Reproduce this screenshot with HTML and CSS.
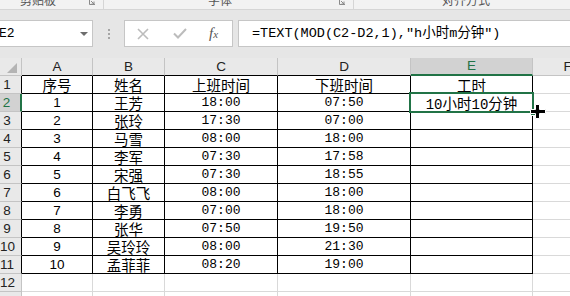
FILE: index.html
```html
<!DOCTYPE html>
<html>
<head>
    <meta charset="utf-8">
    <title>工时计算</title>
    <link rel="stylesheet" href="styles.css">
</head>
<body>

    <!-- bottom edge of the ribbon, group labels cut off -->
    <div class="ribbon">
        <div class="group clip">
            <span class="group-label">剪贴板</span>
            <svg class="launcher" width="6" height="6" viewBox="0 0 6 6"><path d="M0.5 0v5.5H6M2 2l3 3M5 2.5V5H2.5" fill="none" stroke="#8a8a8a"/></svg>
        </div>
        <div class="group font">
            <span class="group-label">字体</span>
            <svg class="launcher" width="6" height="6" viewBox="0 0 6 6"><path d="M0.5 0v5.5H6M2 2l3 3M5 2.5V5H2.5" fill="none" stroke="#8a8a8a"/></svg>
        </div>
        <div class="group align">
            <span class="group-label">对齐方式</span>
        </div>
    </div>

    <!-- name box + formula bar -->
    <div class="fbar">
        <div class="namebox">
            <span class="name">E2</span>
            <span class="drop"></span>
        </div>
        <div class="grip"><i></i><i></i><i></i></div>
        <div class="fxbox">
            <svg class="cancel" width="12" height="12" viewBox="0 0 12 12"><path d="M1 1l10 10M11 1L1 11" stroke="#bcbcbc" stroke-width="1.6"/></svg>
            <svg class="enter" width="14" height="11" viewBox="0 0 14 11"><path d="M1 5.5l4 4L13 1" fill="none" stroke="#bcbcbc" stroke-width="2"/></svg>
            <span class="fx">f<small>x</small></span>
        </div>
        <div class="formula">=TEXT(MOD(C2-D2,1),"h小时m分钟")</div>
    </div>

    <div class="sheet">
        <!-- column headers -->
        <div class="cell corner"><span class="tri"></span></div>
        <div class="cell ch edge">A</div>
        <div class="cell ch edge">B</div>
        <div class="cell ch edge">C</div>
        <div class="cell ch edge">D</div>
        <div class="cell ch sel">E</div>
        <div class="cell ch">F</div>

        <div class="cell rh edge">1</div>
        <div class="cell t cn">序号</div>
        <div class="cell t cn">姓名</div>
        <div class="cell t cn">上班时间</div>
        <div class="cell t cn">下班时间</div>
        <div class="cell t cn">工时</div>
        <div class="cell"></div>

        <div class="cell rh sel">2</div>
        <div class="cell t num">1</div>
        <div class="cell t cn">王芳</div>
        <div class="cell t">18:00</div>
        <div class="cell t">07:50</div>
        <div class="cell t mix">10<span class="cn">小时</span>10<span class="cn">分钟</span></div>
        <div class="cell"></div>

        <div class="cell rh edge">3</div>
        <div class="cell t num">2</div>
        <div class="cell t cn">张玲</div>
        <div class="cell t">17:30</div>
        <div class="cell t">07:00</div>
        <div class="cell t"></div>
        <div class="cell"></div>

        <div class="cell rh edge">4</div>
        <div class="cell t num">3</div>
        <div class="cell t cn">马雪</div>
        <div class="cell t">08:00</div>
        <div class="cell t">18:00</div>
        <div class="cell t"></div>
        <div class="cell"></div>

        <div class="cell rh edge">5</div>
        <div class="cell t num">4</div>
        <div class="cell t cn">李军</div>
        <div class="cell t">07:30</div>
        <div class="cell t">17:58</div>
        <div class="cell t"></div>
        <div class="cell"></div>

        <div class="cell rh edge">6</div>
        <div class="cell t num">5</div>
        <div class="cell t cn">宋强</div>
        <div class="cell t">07:30</div>
        <div class="cell t">18:55</div>
        <div class="cell t"></div>
        <div class="cell"></div>

        <div class="cell rh edge">7</div>
        <div class="cell t num">6</div>
        <div class="cell t cn">白飞飞</div>
        <div class="cell t">08:00</div>
        <div class="cell t">18:00</div>
        <div class="cell t"></div>
        <div class="cell"></div>

        <div class="cell rh edge">8</div>
        <div class="cell t num">7</div>
        <div class="cell t cn">李勇</div>
        <div class="cell t">07:00</div>
        <div class="cell t">18:00</div>
        <div class="cell t"></div>
        <div class="cell"></div>

        <div class="cell rh edge">9</div>
        <div class="cell t num">8</div>
        <div class="cell t cn">张华</div>
        <div class="cell t">07:50</div>
        <div class="cell t">19:50</div>
        <div class="cell t"></div>
        <div class="cell"></div>

        <div class="cell rh edge">10</div>
        <div class="cell t num">9</div>
        <div class="cell t cn">吴玲玲</div>
        <div class="cell t">08:00</div>
        <div class="cell t">21:30</div>
        <div class="cell t"></div>
        <div class="cell"></div>

        <div class="cell rh edge">11</div>
        <div class="cell t num">10</div>
        <div class="cell t cn">孟菲菲</div>
        <div class="cell t">08:20</div>
        <div class="cell t">19:00</div>
        <div class="cell t"></div>
        <div class="cell"></div>

        <div class="cell rh">12</div>
        <div class="cell"></div>
        <div class="cell"></div>
        <div class="cell"></div>
        <div class="cell"></div>
        <div class="cell"></div>
        <div class="cell"></div>

        <div class="cell rh">13</div>
        <div class="cell"></div>
        <div class="cell"></div>
        <div class="cell"></div>
        <div class="cell"></div>
        <div class="cell"></div>
        <div class="cell"></div>

        <!-- active cell outline, fill handle and mouse cursor sit on top of the grid -->
        <div class="selection"></div>
        <div class="handle"></div>
        <svg class="cursor" width="16" height="15" viewBox="0 0 16 15">
            <path d="M5.5 0.5h4v5h6v4h-6v5h-4v-5h-5v-4h5z" fill="#000" stroke="#fff"/>
        </svg>
    </div>

</body>
</html>
```

FILE: styles.css
```css
body {
    margin: 0;
    width: 570px;
    height: 296px;
    overflow: hidden;
    background-color: #e6e6e6;
    font-family: "Liberation Mono", "Noto Sans CJK SC", monospace;
    color: #000;
}

/* ribbon strip */
.ribbon {
    display: flex;
    height: 9px;
    overflow: hidden;
    background-color: #f2f2f2;
    border-bottom: 1px solid #d5d5d5;
}

.group {
    display: flex;
    align-items: flex-start;
    border-right: 1px solid #d5d5d5;
    box-sizing: border-box;
}

.group-label {
    font-family: "Noto Sans CJK SC", sans-serif;
    font-size: 12px;
    line-height: 12px;
    margin-top: -6px;
    color: #555;
}

.launcher {
    margin-left: auto;
    margin-right: 8px;
    margin-top: -1px;
}

.clip {
    width: 104px;
    padding-left: 20px;
}

.font {
    width: 250px;
    padding-left: 104px;
}

.align {
    flex: 1;
    padding-left: 88px;
    border-right: none;
}

/* formula bar */
.fbar {
    display: flex;
    align-items: flex-start;
    height: 48px;
    padding-top: 10px;
    box-sizing: border-box;
}

.namebox {
    display: flex;
    align-items: center;
    justify-content: space-between;
    width: 93px;
    height: 27px;
    box-sizing: border-box;
    padding-right: 4px;
    background-color: #fff;
    border: 1px solid #c6c6c6;
    border-left: none;
    font-size: 13px;
}

.name {
    margin-left: -1px;
}

.drop {
    width: 0;
    height: 0;
    border-left: 4px solid transparent;
    border-right: 4px solid transparent;
    border-top: 4px solid #6d6d6d;
}

.grip {
    display: flex;
    flex-direction: column;
    align-items: center;
    justify-content: center;
    gap: 2px;
    width: 31px;
    height: 27px;
}

.grip i {
    display: block;
    width: 2px;
    height: 2px;
    background-color: #a5a5a5;
}

.fxbox {
    display: flex;
    align-items: center;
    width: 109px;
    height: 27px;
    box-sizing: border-box;
    background-color: #fff;
    border: 1px solid #c6c6c6;
}

.cancel {
    margin-left: 12px;
}

.enter {
    margin-left: 24px;
}

.fx {
    margin-left: 22px;
    font-family: "Liberation Serif", serif;
    font-style: italic;
    font-size: 15px;
    color: #555;
}

.fx small {
    font-size: 11px;
}

.formula {
    flex: 1;
    height: 27px;
    margin-left: 5px;
    box-sizing: border-box;
    padding-left: 13px;
    background-color: #fff;
    border: 1px solid #c6c6c6;
    border-right: none;
    font-size: 13.5px;
    line-height: 25px;
    white-space: nowrap;
}

/* worksheet grid */
.sheet {
    position: relative;
    display: grid;
    grid-template-columns: 22px 71px 72px 113px 133px 122px 70px;
    grid-auto-rows: 18px;
    background-color: #fff;
}

.cell {
    box-sizing: border-box;
    border-right: 1px solid #d9d9d9;
    border-bottom: 1px solid #d9d9d9;
    text-align: center;
    font-size: 13px;
    line-height: 17px;
    white-space: nowrap;
    overflow: hidden;
}

.corner,
.ch,
.rh {
    background-color: #e9e9e9;
    border-right-color: #c4c4c4;
    border-bottom-color: #c4c4c4;
    font-family: "Liberation Sans", sans-serif;
    font-size: 13.5px;
    color: #222;
}

.corner {
    position: relative;
}

.tri {
    position: absolute;
    right: 4px;
    bottom: 2px;
    width: 0;
    height: 0;
    border-left: 10px solid transparent;
    border-bottom: 10px solid #b4b4b4;
}

.rh {
    padding-right: 7px;
}

.ch.edge {
    border-bottom-color: #000;
}

.rh.edge {
    border-right-color: #000;
}

.ch.sel {
    background-color: #d2d2d2;
    color: #217346;
    border-bottom: 2px solid #217346;
    line-height: 16px;
}

.rh.sel {
    background-color: #d2d2d2;
    color: #217346;
    border-right: 2px solid #217346;
}

.t {
    border-right-color: #000;
    border-bottom-color: #000;
}

.cn {
    font-family: "Noto Sans CJK SC", sans-serif;
    font-size: 14.5px;
}

.num {
    font-family: "Liberation Sans", sans-serif;
    font-size: 13.5px;
}

.mix {
    font-size: 14px;
}

.mix .cn {
    font-size: 14.5px;
}

.selection {
    position: absolute;
    left: 409px;
    top: 34px;
    width: 125px;
    height: 21px;
    box-sizing: border-box;
    border: 2px solid #217346;
}

.handle {
    position: absolute;
    left: 530px;
    top: 51px;
    width: 5px;
    height: 5px;
    background-color: #217346;
    border: 1px solid #fff;
}

.cursor {
    position: absolute;
    left: 530px;
    top: 46px;
}
```
